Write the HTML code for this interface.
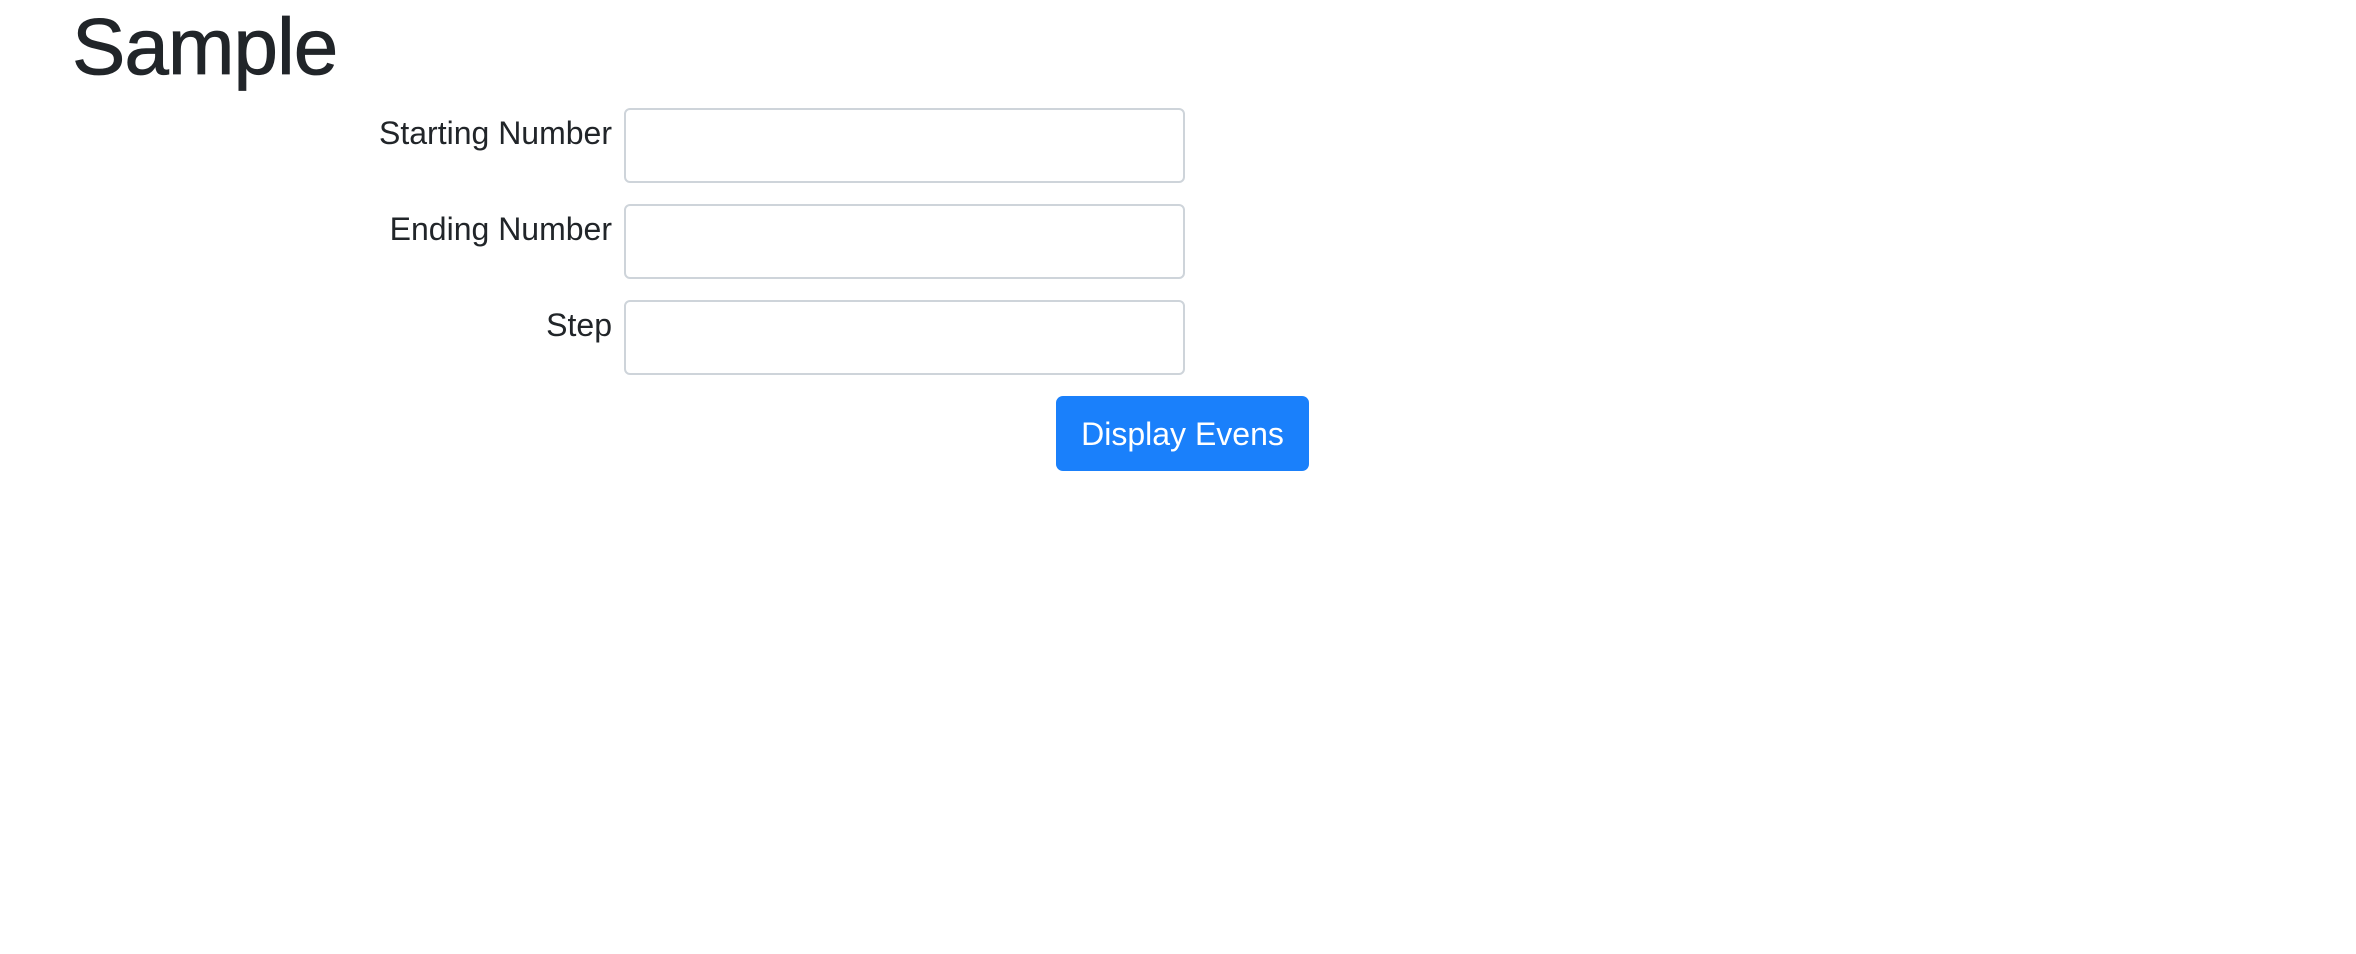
<!DOCTYPE html>
<html><head><meta charset="utf-8"><style>
body{margin:0;width:2356px;height:954px;background:#fff;font-family:"Liberation Sans",sans-serif;color:#212529;position:relative;overflow:hidden}
h1{position:absolute;left:72px;top:1px;margin:0;font-size:80px;font-weight:normal;line-height:92px;letter-spacing:-1px;-webkit-text-stroke:0.8px #212529}
.l{position:absolute;right:calc(2356px - 612px);font-size:32px;line-height:40px;white-space:nowrap}
.i{position:absolute;left:624px;width:557px;height:71px;border:2px solid #ced4da;border-radius:6px;box-sizing:content-box}
.b{position:absolute;left:1056px;top:396px;width:253px;height:75px;background:#1a80fb;border-radius:7px;color:#fff;font-size:32px;line-height:77px;text-align:center}
</style></head><body>
<h1>Sample</h1>
<div class="l" style="top:113px">Starting Number</div>
<div class="i" style="top:108px"></div>
<div class="l" style="top:209px">Ending Number</div>
<div class="i" style="top:204px"></div>
<div class="l" style="top:305px">Step</div>
<div class="i" style="top:300px"></div>
<div class="b">Display Evens</div>
</body></html>
